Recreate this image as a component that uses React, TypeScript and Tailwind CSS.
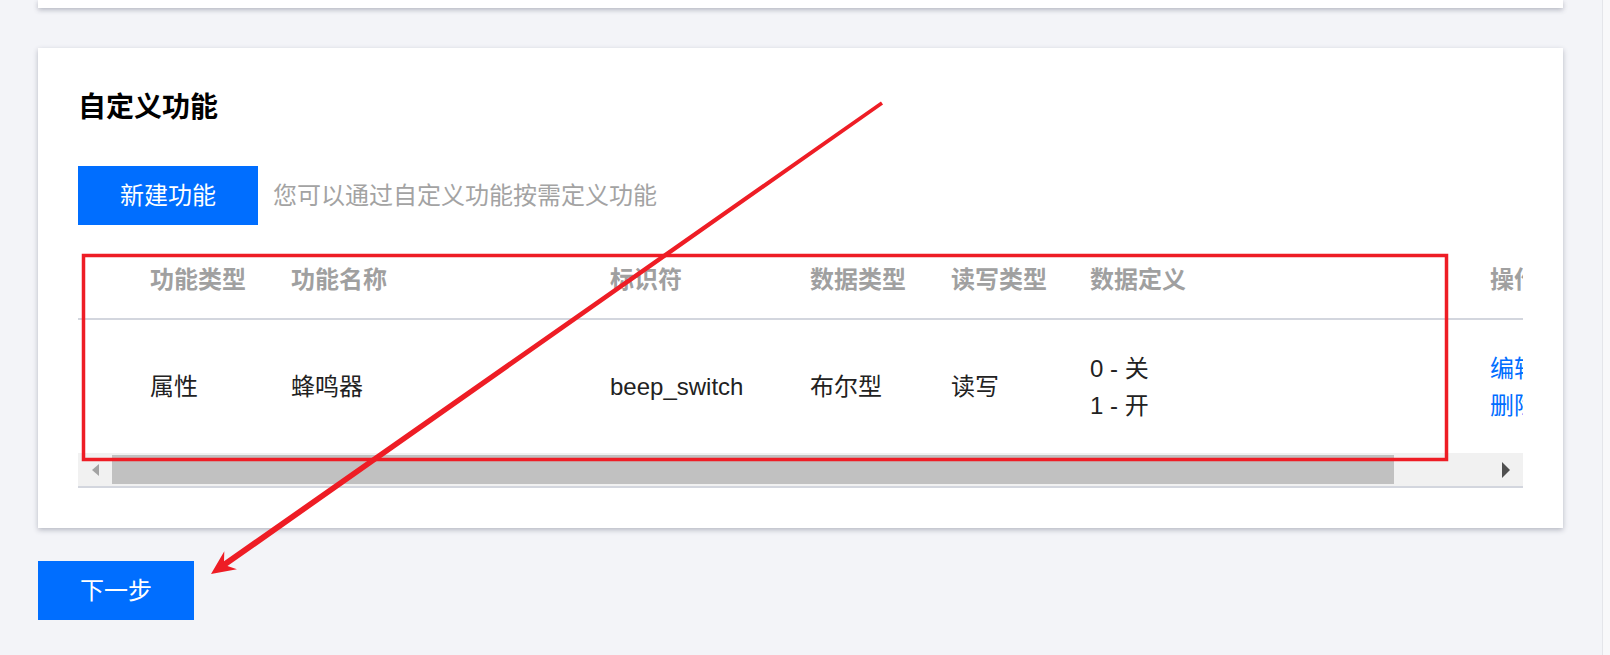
import React from "react";

const FONT = "font-['Liberation_Sans','Noto_Sans_CJK_SC',sans-serif]";

function HeaderCell({ children }: { children?: React.ReactNode }) {
  return <div className="text-[24px] leading-[36px] font-bold text-[#a0a0a0] whitespace-nowrap">{children}</div>;
}

function Cell({ children }: { children?: React.ReactNode }) {
  return <div className="text-[24px] leading-[37px] text-[#222222] whitespace-nowrap">{children}</div>;
}

export default function App() {
  const cols = "grid grid-cols-[72px_141px_319px_200px_141px_139px_400px_160px] w-max";
  return (
    <div className={`relative w-[1610px] h-[655px] bg-[#f3f4f8] overflow-hidden flex ${FONT}`}>
      <div className="flex-1 min-w-0 pl-[38px] pr-[39px] flex flex-col">
        {/* top card (only its bottom edge visible) */}
        <div className="h-[8px] bg-white shadow-[0_2px_5px_0_rgba(54,58,80,0.32)]" />

        {/* custom functions card */}
        <div className="mt-[40px] min-w-0 bg-white shadow-[0_2px_5px_0_rgba(54,58,80,0.32)] px-[40px] pt-[40px] pb-[40px]">
          <div className="h-[40px] text-[28px] leading-[40px] font-bold text-black">自定义功能</div>

          <div className="mt-[38px] flex items-center">
            <div className="w-[180px] h-[59px] bg-[#006eff] text-white text-[24px] flex items-center justify-center">
              新建功能
            </div>
            <div className="ml-[15px] text-[24px] leading-[36px] text-[#a3a3a3]">您可以通过自定义功能按需定义功能</div>
          </div>

          <div className="mt-[16px] w-full overflow-hidden">
            <div className="h-[79px] border-b-2 border-[#d3d6de] flex items-center">
              <div className={`${cols} items-center`}>
                <div />
                <HeaderCell>功能类型</HeaderCell>
                <HeaderCell>功能名称</HeaderCell>
                <HeaderCell>标识符</HeaderCell>
                <HeaderCell>数据类型</HeaderCell>
                <HeaderCell>读写类型</HeaderCell>
                <HeaderCell>数据定义</HeaderCell>
                <HeaderCell>操作</HeaderCell>
              </div>
            </div>
            <div className="h-[133px] flex items-center">
              <div className={`${cols} items-center`}>
                <div />
                <Cell>属性</Cell>
                <Cell>蜂鸣器</Cell>
                <Cell>beep_switch</Cell>
                <Cell>布尔型</Cell>
                <Cell>读写</Cell>
                <div className="text-[24px] leading-[37px] text-[#222222] whitespace-nowrap flex flex-col">
                  <span>0 - 关</span>
                  <span>1 - 开</span>
                </div>
                <div className="text-[24px] leading-[37px] text-[#006eff] whitespace-nowrap flex flex-col">
                  <span>编辑</span>
                  <span>删除</span>
                </div>
              </div>
            </div>
            {/* horizontal scrollbar */}
            <div className="h-[33px] bg-[#f1f1f1] flex items-stretch">
              <div className="w-[34px] shrink-0 flex items-center justify-center">
                <div className="w-0 h-0 border-y-[6px] border-y-transparent border-r-[7px] border-r-[#a3a3a3]" />
              </div>
              <div className="w-[1282px] shrink-0 my-[2px] bg-[#c1c1c1]" />
              <div className="flex-1" />
              <div className="w-[34px] shrink-0 flex items-center justify-center">
                <div className="w-0 h-0 border-y-[8px] border-y-transparent border-l-[8px] border-l-[#505050]" />
              </div>
            </div>
            <div className="h-[2px] bg-[#d3d6de]" />
          </div>
        </div>

        <div className="mt-[33px] w-[156px] h-[59px] bg-[#006eff] text-white text-[24px] flex items-center justify-center">
          下一步
        </div>
      </div>
      <div className="w-[8px] shrink-0 bg-[#f8f8fa] border-l border-[#e4e5ea]" />

      {/* annotation overlay */}
      <svg className="absolute inset-0 pointer-events-none" width="1610" height="655" viewBox="0 0 1610 655">
        <rect x="83.5" y="255.5" width="1363" height="204" fill="none" stroke="#ee1d25" strokeWidth="3.5" />
        <polygon
          fill="#ee1d25"
          points="211,574 236.96,569.21 227.46,566.12 883.03,104.47 880.97,101.53 224.00,561.21 224.32,551.21"
        />
      </svg>
    </div>
  );
}
